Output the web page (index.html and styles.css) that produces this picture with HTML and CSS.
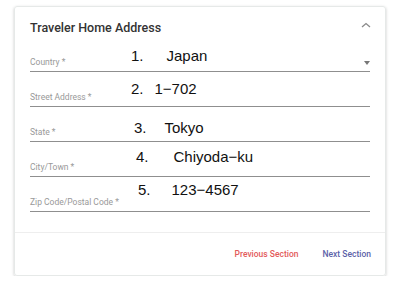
FILE: index.html
```html
<!DOCTYPE html>
<html lang="en">
<head>
    <meta charset="UTF-8">
    <meta name="viewport" content="width=device-width, initial-scale=1.0">
    <title>Traveler Home Address</title>
    <link rel="stylesheet" href="styles.css">
</head>
<body>

<div class="card">
    <div class="card-head">
        <h2>Traveler Home Address</h2>
        <svg class="chevron" width="10" height="6" viewBox="0 0 10 6"><path d="M1 5 L5 1.5 L9 5" fill="none" stroke="#8a8a8a" stroke-width="1.3"/></svg>
    </div>

    <div class="fields">
        <div class="field">
            <span class="label">Country *</span>
            <span class="value v1"><b>1.</b><i>Japan</i></span>
            <span class="caret"></span>
        </div>
        <div class="field">
            <span class="label">Street Address *</span>
            <span class="value v2"><b>2.</b><i>1&#8722;702</i></span>
        </div>
        <div class="field">
            <span class="label">State *</span>
            <span class="value v3"><b>3.</b><i>Tokyo</i></span>
        </div>
        <div class="field">
            <span class="label">City/Town *</span>
            <span class="value v4"><b>4.</b><i>Chiyoda&#8722;ku</i></span>
        </div>
        <div class="field">
            <span class="label">Zip Code/Postal Code *</span>
            <span class="value v5"><b>5.</b><i>123&#8722;4567</i></span>
        </div>
    </div>

    <div class="card-foot">
        <a href="#" class="btn prev">Previous Section</a>
        <a href="#" class="btn next">Next Section</a>
    </div>
</div>

</body>
</html>
```

FILE: styles.css
```css
body {
    margin: 0;
    padding: 6px 0 0 14px;
    background: #fff;
    font-family: Roboto, "Liberation Sans", sans-serif;
}

.card {
    width: 372px;
    height: 270px;
    box-sizing: border-box;
    border: 1px solid #e6e9e8;
    border-radius: 3px;
    box-shadow: 0 1px 3px rgba(0, 0, 0, 0.22);
    display: flex;
    flex-direction: column;
}

.card-head {
    display: flex;
    justify-content: space-between;
    align-items: center;
    padding: 13px 14px 0 15px;
    height: 14px;
}

.card-head h2 {
    margin: 0;
    font-size: 12.5px;
    font-weight: 500;
    color: #333;
}

.chevron {
    margin-top: -4px;
}

.fields {
    padding: 3px 15px 0 15px;
}

.field {
    display: grid;
    grid-template-columns: 101px 1fr 12px;
    align-items: end;
    height: 34px;
    border-bottom: 1px solid #8f8f8f;
}

.label {
    font-size: 8.5px;
    color: #999;
    padding-bottom: 4px;
    white-space: nowrap;
}

.value {
    font-family: "Liberation Sans", Arial, sans-serif;
    font-size: 15px;
    color: #111;
    padding-bottom: 7px;
    white-space: nowrap;
    display: flex;
}

.value b,
.value i {
    font-weight: normal;
    font-style: normal;
}

.v1 { padding-bottom: 7px; }
.v1 i { margin-left: 23px; }
.v2 { padding-bottom: 9px; }
.v2 i { margin-left: 11px; }
.v3 { padding-left: 3px; padding-bottom: 5px; }
.v3 i { margin-left: 18px; }
.v4 { padding-left: 5px; padding-bottom: 11px; }
.v4 i { margin-left: 25px; }
.v5 { padding-left: 7px; padding-bottom: 13px; }
.v5 i { margin-left: 21px; }

.caret {
    width: 0;
    height: 0;
    border-left: 3.5px solid transparent;
    border-right: 3.5px solid transparent;
    border-top: 4px solid #777;
    margin-bottom: 6px;
    justify-self: end;
}

.card-foot {
    margin-top: auto;
    border-top: 1px solid #eeeeee;
    height: 42px;
    display: flex;
    justify-content: flex-end;
    align-items: center;
    gap: 24px;
    padding: 0 14px 0 0;
}

.btn {
    font-size: 8.5px;
    font-weight: 500;
    text-decoration: none;
}

.prev {
    color: #e35b5b;
}

.next {
    color: #5c62a8;
}
```
